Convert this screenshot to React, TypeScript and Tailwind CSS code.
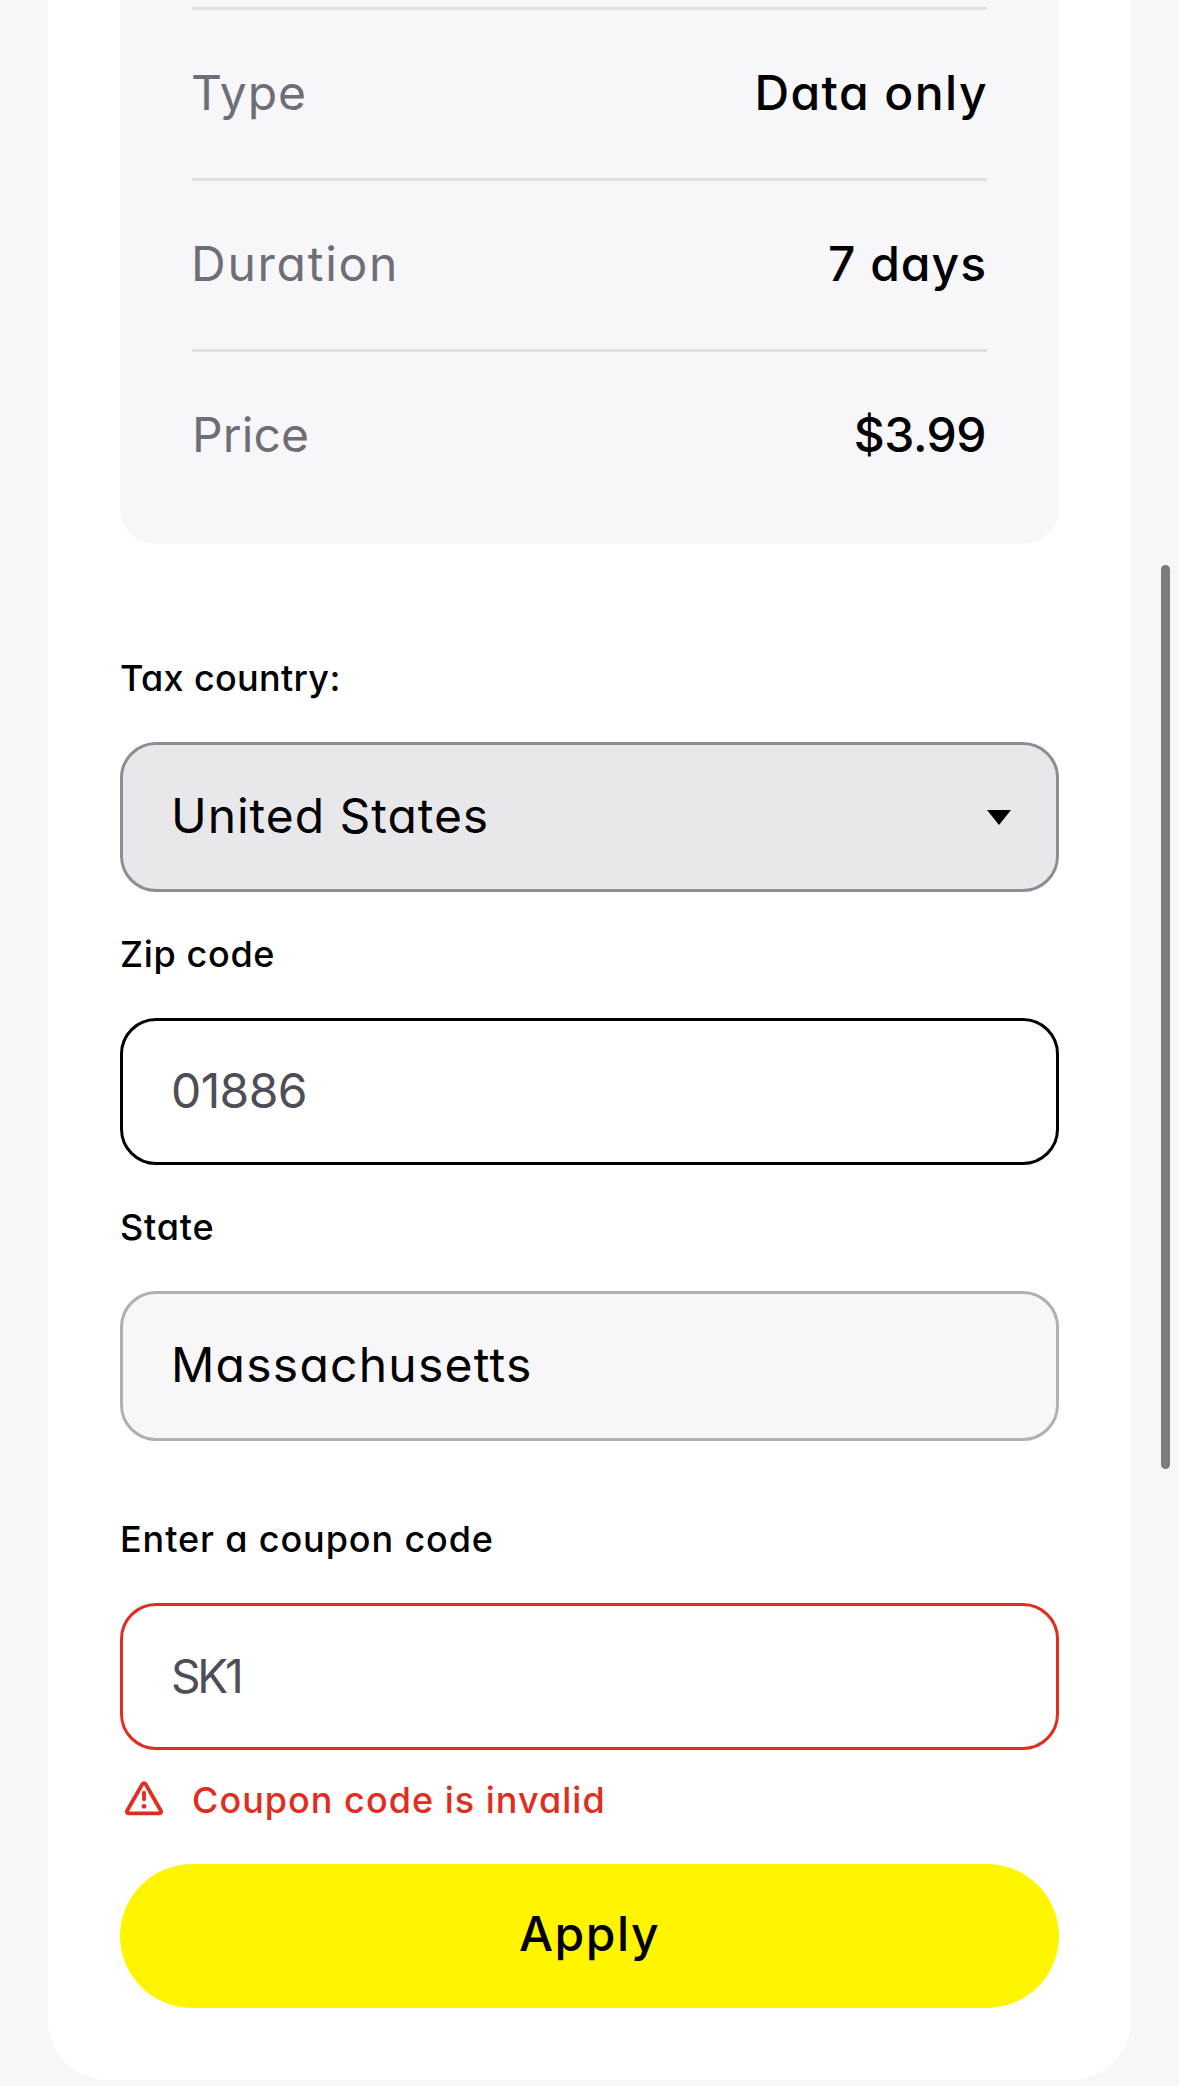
import { useState } from "react";

const rows = [
  { label: "Type", value: "Data only", labelClass: "tracking-[0.87px] -ml-px", valueClass: "tracking-[1.45px] -mr-px" },
  { label: "Duration", value: "7 days", labelClass: "tracking-[1.75px] -ml-px", valueClass: "tracking-[1px]" },
  { label: "Price", value: "$3.99", labelClass: "tracking-[0.12px]", valueClass: "tracking-[-0.5px] mr-px" },
];

const fieldBase = "w-full rounded-[36px] border-[3px] text-5xl outline-none";

function WarningIcon() {
  return (
    <svg width="48" height="48" viewBox="0 0 48 48" fill="none" className="shrink-0">
      <path
        d="M22.4 8.1 7.1 34.8c-.8 1.3.1 2.5 1.4 2.5h31c1.3 0 2.2-1.2 1.4-2.5L25.6 8.1c-.8-1.3-2.4-1.3-3.2 0z"
        stroke="#e22d1e"
        strokeWidth="3.8"
        strokeLinejoin="round"
      />
      <path d="M24 16.6v6.6" stroke="#e22d1e" strokeWidth="3.8" strokeLinecap="round" />
      <circle cx="24" cy="30.3" r="2.4" fill="#e22d1e" />
    </svg>
  );
}

export default function App() {
  const [zip, setZip] = useState("01886");
  const [coupon, setCoupon] = useState("SK1");

  return (
    <div className="relative h-[2086px] w-[1179px] overflow-hidden bg-[#f7f7f9] px-12 font-['Inter',sans-serif] text-black [font-feature-settings:'cv11']">
      <main className="flex h-[2080px] flex-col rounded-b-[60px] bg-white px-[72px]">
        {/* plan summary */}
        <section className="h-[544px] shrink-0 rounded-b-[36px] bg-[#f7f7f9] px-[72px] pt-[7px]">
          {rows.map((r) => (
            <div key={r.label} className="flex h-[171px] items-center justify-between border-t-[3px] border-[#e1e1e3] pb-[3px] text-5xl">
              <span className={`text-[#6e6e76] ${r.labelClass}`}>{r.label}</span>
              <span className={`font-medium ${r.valueClass}`}>{r.value}</span>
            </div>
          ))}
        </section>

        {/* tax details */}
        <form className="mt-[107px] flex flex-col text-4xl/[54px] font-medium" onSubmit={(e) => e.preventDefault()}>
          <label className="tracking-[0.32px]">Tax country:</label>
          <button
            type="button"
            className={`${fieldBase} mt-[37px] flex h-[150px] items-center justify-between border-[#8d8d96] bg-[#e8e8ea] pr-[45px] pb-[3px] pl-12 font-normal tracking-[0.95px]`}
          >
            United States
            <svg width="24" height="15" viewBox="0 0 24 15" className="mt-[3px]">
              <path d="M0 0h24L12 15z" fill="#000" />
            </svg>
          </button>

          <label htmlFor="zip" className="mt-[35px] tracking-[0.65px]">Zip code</label>
          <input
            id="zip"
            value={zip}
            onChange={(e) => setZip(e.target.value)}
            className={`${fieldBase} mt-[37px] h-[147px] border-black bg-white pb-0.5 pl-12 font-normal tracking-[-0.6px] text-[#4e4e57]`}
          />

          <label className="mt-[35px] tracking-[0.79px]">State</label>
          <div className={`${fieldBase} mt-[37px] flex h-[150px] items-center border-[#afafb4] bg-[#f7f7f9] pb-[3px] pl-12 font-normal tracking-[1.25px]`}>
            Massachusetts
          </div>

          <label htmlFor="coupon" className="mt-[71px] tracking-[0.88px]">Enter a coupon code</label>
          <input
            id="coupon"
            value={coupon}
            onChange={(e) => setCoupon(e.target.value)}
            className="mt-[37px] h-[147px] w-full rounded-[36px] border-[3px] border-[#e22d1e] bg-white pb-0.5 pl-12 text-[46px] font-normal tracking-[-3.2px] text-[#4e4e57] outline-none"
          />
          <div className="mt-[23px] flex items-center gap-6 text-[#e22d1e]">
            <WarningIcon />
            <span className="tracking-[1.01px]">Coupon code is invalid</span>
          </div>

          <button type="submit" className="mt-[37px] h-36 rounded-full bg-[#fff500] pb-1 text-5xl tracking-[1.55px]">
            Apply
          </button>
        </form>
      </main>

      {/* scroll thumb */}
      <div className="absolute top-[565px] right-[9px] h-[904px] w-[9px] rounded-full bg-[#7c7c7e]" />
    </div>
  );
}
